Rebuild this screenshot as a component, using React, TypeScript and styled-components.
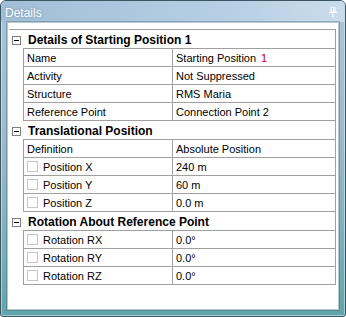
import React from "react";
import styled, { createGlobalStyle } from "styled-components";

const GlobalStyle = createGlobalStyle`
    html, body {
        margin: 0;
        padding: 0;
        background: #ffffff;
    }
    body {
        font-family: "Liberation Sans", Arial, sans-serif;
    }
`;

const Window = styled.div`
    width: 346px;
    height: 317px;
    box-sizing: border-box;
    border: 1px solid #3b5563;
    border-radius: 6px 6px 3px 3px;
    padding: 0 6px 6px 6px;
    display: flex;
    flex-direction: column;
    background: linear-gradient(
        to bottom,
        #a9c4da 0%,
        #9dbccf 40%,
        #7fb0bd 75%,
        #5fa6aa 100%
    );
    box-shadow: inset 0 0 0 1px rgba(255, 255, 255, 0.45);
    overflow: hidden;
`;

const TitleBar = styled.div`
    height: 21px;
    display: flex;
    align-items: center;
    justify-content: space-between;
    margin: 0 -6px;
    padding: 0 8px 0 4px;
    background: linear-gradient(to right, #a2bfd7 0%, #b4cde2 60%, #c9dcec 100%);
`;

const Title = styled.span`
    color: #ffffff;
    font-size: 12px;
    text-shadow: 0 0 3px rgba(70, 110, 140, 0.6);
    padding-top: 2px;
`;

const Client = styled.div`
    flex: 1;
    background: #ffffff;
    border: 1px solid #b9c6cf;
    padding: 6px 2px 0 1px;
    box-shadow: 0 0 0 1px rgba(60, 90, 105, 0.35);
`;

const Grid = styled.div`
    border-top: 1px solid #a0a0a0;
    border-right: 1px solid #a0a0a0;
    font-size: 11px;
    color: #000000;
`;

const HeaderRow = styled.div`
    height: 18px;
    display: grid;
    grid-template-columns: 14px 1fr;
    align-items: center;
`;

const Expander = styled.span`
    width: 9px;
    height: 9px;
    box-sizing: border-box;
    border: 1px solid #7f7f7f;
    background: #ffffff;
    margin: 2px 0 0 3px;
    display: flex;
    align-items: center;
    justify-content: center;

    &::after {
        content: "";
        width: 5px;
        height: 1px;
        background: #000000;
    }
`;

const HeaderText = styled.span`
    font-size: 12px;
    font-weight: bold;
    padding: 2px 0 0 5px;
`;

const PropRow = styled.div`
    display: grid;
    grid-template-columns: 14px 149px 1fr;
`;

const Cell = styled.div<{ $last?: boolean }>`
    display: flex;
    align-items: center;
    gap: 5px;
    border-top: 1px solid #a0a0a0;
    border-left: 1px solid #a0a0a0;
    border-bottom: ${(p) => (p.$last ? "1px solid #a0a0a0" : "none")};
    padding-left: 3px;
    white-space: nowrap;
    overflow: hidden;
    height: ${(p) => (p.$last ? "19px" : "18px")};
    box-sizing: border-box;
`;

const Check = styled.span`
    width: 11px;
    height: 11px;
    box-sizing: border-box;
    border: 1px solid #c6c6c6;
    background: #ffffff;
    flex: none;
`;

const Red = styled.span`
    color: #c00000;
`;

type Prop = { label: string; value: React.ReactNode; check?: boolean };
type Group = { title: string; props: Prop[] };

const groups: Group[] = [
    {
        title: "Details of Starting Position 1",
        props: [
            {
                label: "Name",
                value: (
                    <>
                        Starting Position <Red>1</Red>
                    </>
                ),
            },
            { label: "Activity", value: "Not Suppressed" },
            { label: "Structure", value: "RMS Maria" },
            { label: "Reference Point", value: "Connection Point 2" },
        ],
    },
    {
        title: "Translational Position",
        props: [
            { label: "Definition", value: "Absolute Position" },
            { label: "Position X", value: "240 m", check: true },
            { label: "Position Y", value: "60 m", check: true },
            { label: "Position Z", value: "0.0 m", check: true },
        ],
    },
    {
        title: "Rotation About Reference Point",
        props: [
            { label: "Rotation RX", value: "0.0°", check: true },
            { label: "Rotation RY", value: "0.0°", check: true },
            { label: "Rotation RZ", value: "0.0°", check: true },
        ],
    },
];

const Pin = () => (
    <svg width="8" height="10" viewBox="0 0 8 10">
        <rect x="2" y="0" width="4" height="5" fill="none" stroke="#ffffff" strokeWidth="1" />
        <rect x="4" y="0.5" width="1" height="4.5" fill="#ffffff" />
        <rect x="0" y="5" width="8" height="1" fill="#ffffff" />
        <rect x="3.5" y="6" width="1" height="4" fill="#ffffff" />
    </svg>
);

const App = () => {
    return (
        <>
            <GlobalStyle />
            <Window>
                <TitleBar>
                    <Title>Details</Title>
                    <Pin />
                </TitleBar>
                <Client>
                    <Grid>
                        {groups.map((g) => (
                            <React.Fragment key={g.title}>
                                <HeaderRow>
                                    <Expander />
                                    <HeaderText>{g.title}</HeaderText>
                                </HeaderRow>
                                {g.props.map((p, i) => {
                                    const last = i === g.props.length - 1;
                                    return (
                                        <PropRow key={p.label}>
                                            <span />
                                            <Cell $last={last}>
                                                {p.check && <Check />}
                                                {p.label}
                                            </Cell>
                                            <Cell $last={last}>{p.value}</Cell>
                                        </PropRow>
                                    );
                                })}
                            </React.Fragment>
                        ))}
                    </Grid>
                </Client>
            </Window>
        </>
    );
};

export default App;
